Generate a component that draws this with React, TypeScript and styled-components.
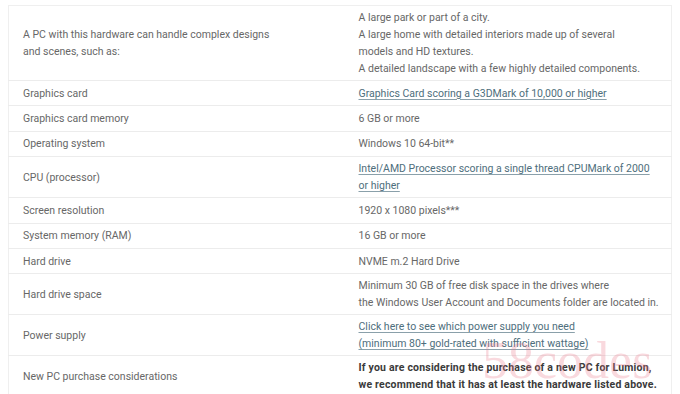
import React from 'react';
import styled, { createGlobalStyle } from 'styled-components';

const GlobalStyle = createGlobalStyle`
  html, body {
    margin: 0;
    padding: 0;
    background: #ffffff;
  }
  body {
    font-family: Roboto, "Liberation Sans", Arial, sans-serif;
    overflow: hidden;
  }
`;

const Page = styled.div`
  position: relative;
  width: 680px;
  height: 394px;
  padding: 5px 8px 0 8px;
  box-sizing: border-box;
  overflow: hidden;
`;

const SpecTable = styled.table`
  width: 664px;
  table-layout: fixed;
  border-collapse: collapse;
  border: 1px solid #efefef;
  font-size: 10.5px;
  line-height: 17px;
  color: #676767;
`;

const Row = styled.tr`
  border-bottom: 1px solid #ececec;
`;

const Cell = styled.td<{ $wide?: boolean }>`
  width: ${p => (p.$wide ? '336px' : 'auto')};
  box-sizing: border-box;
  height: 25.4px;
  padding: 3px 14px 3px 14px;
  vertical-align: middle;
  text-align: left;
  white-space: nowrap;
`;

const SpecLink = styled.a`
  color: #4e6e7c;
  text-decoration: underline;
  text-decoration-color: #8aa0aa;
  text-underline-offset: 2px;
`;

const Strong = styled.span`
  font-weight: 700;
  color: #3a3a3a;
  letter-spacing: 0.2px;
`;

const Watermark = styled.div`
  position: absolute;
  left: 482px;
  top: 331px;
  font-family: "Liberation Serif", "DejaVu Serif", serif;
  font-size: 52px;
  line-height: 60px;
  color: rgba(232, 120, 135, 0.28);
  pointer-events: none;
`;

type Spec = { label: React.ReactNode; value: React.ReactNode };

const specs: Spec[] = [
  {
    label: (
      <>
        A PC with this hardware can handle complex designs
        <br />
        and scenes, such as:
      </>
    ),
    value: (
      <>
        A large park or part of a city.
        <br />
        A large home with detailed interiors made up of several
        <br />
        models and HD textures.
        <br />
        A detailed landscape with a few highly detailed components.
      </>
    ),
  },
  {
    label: 'Graphics card',
    value: <SpecLink href="#">Graphics Card scoring a G3DMark of 10,000 or higher</SpecLink>,
  },
  { label: 'Graphics card memory', value: '6 GB or more' },
  { label: 'Operating system', value: 'Windows 10 64-bit**' },
  {
    label: 'CPU (processor)',
    value: (
      <SpecLink href="#">
        Intel/AMD Processor scoring a single thread CPUMark of 2000
        <br />
        or higher
      </SpecLink>
    ),
  },
  { label: 'Screen resolution', value: '1920 x 1080 pixels***' },
  { label: 'System memory (RAM)', value: '16 GB or more' },
  { label: 'Hard drive', value: 'NVME m.2 Hard Drive' },
  {
    label: 'Hard drive space',
    value: (
      <>
        Minimum 30 GB of free disk space in the drives where
        <br />
        the Windows User Account and Documents folder are located in.
      </>
    ),
  },
  {
    label: 'Power supply',
    value: (
      <SpecLink href="#">
        Click here to see which power supply you need
        <br />
        (minimum 80+ gold-rated with sufficient wattage)
      </SpecLink>
    ),
  },
  {
    label: 'New PC purchase considerations',
    value: (
      <Strong>
        If you are considering the purchase of a new PC for Lumion,
        <br />
        we recommend that it has at least the hardware listed above.
      </Strong>
    ),
  },
];

const App: React.FC = () => {
  return (
    <>
      <GlobalStyle />
      <Page>
        <SpecTable>
          <tbody>
            {specs.map((spec, index) => (
              <Row key={index}>
                <Cell $wide>{spec.label}</Cell>
                <Cell>{spec.value}</Cell>
              </Row>
            ))}
          </tbody>
        </SpecTable>
        <Watermark>58codes</Watermark>
      </Page>
    </>
  );
};

export default App;
